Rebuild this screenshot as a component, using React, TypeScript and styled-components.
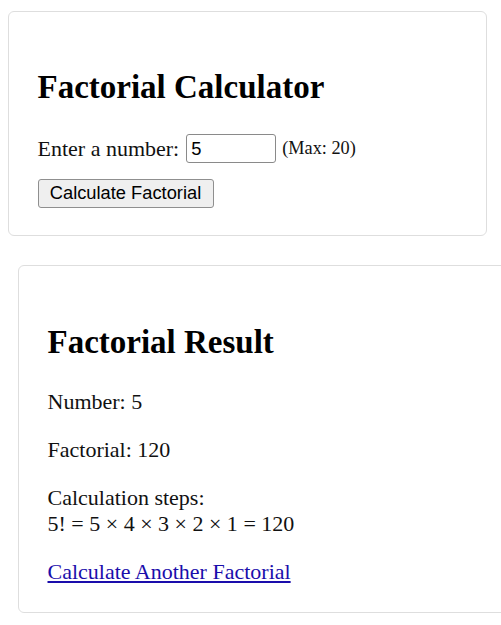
import styled, { createGlobalStyle } from 'styled-components';

const GlobalStyle = createGlobalStyle`
  html, body {
    margin: 0;
    padding: 0;
    background: #fff;
    overflow: hidden;
  }
  body {
    font-family: "Liberation Serif", "Times New Roman", serif;
    font-size: 22px;
    color: #111;
  }
`;

export default function App() {
  const n = 5;
  const steps = [5, 4, 3, 2, 1];
  const result = steps.reduce((a, b) => a * b, 1);

  return (
    <Page>
      <GlobalStyle />
      <Card $left={8} $top={11} $width={479} $padTop={29}>
        <Title>Factorial Calculator</Title>
        <Form onSubmit={(e) => e.preventDefault()}>
          <InputRow>
            <Label htmlFor="num">Enter a number:</Label>
            <NumberInput id="num" type="text" defaultValue={n} />
            <Hint>(Max: 20)</Hint>
          </InputRow>
          <div>
            <SubmitButton type="submit">Calculate Factorial</SubmitButton>
          </div>
        </Form>
      </Card>
      <Card $left={18} $top={29} $width={500} $padTop={29.5}>
        <Title>Factorial Result</Title>
        <Para>Number: {n}</Para>
        <Para>Factorial: {result}</Para>
        <Para>
          Calculation steps:
          <br />
          {n}! = {steps.join(' × ')} = {result}
        </Para>
        <LinkBox>
          <Anchor href="#">Calculate Another Factorial</Anchor>
        </LinkBox>
      </Card>
    </Page>
  );
}

const Page = styled.div`
  display: flex;
  flex-direction: column;
  width: 501px;
  overflow: hidden;
`;

const Card = styled.section<{ $left: number; $top: number; $width: number; $padTop: number }>`
  box-sizing: border-box;
  flex: none;
  width: ${({ $width }) => $width}px;
  margin-left: ${({ $left }) => $left}px;
  margin-top: ${({ $top }) => $top}px;
  padding: 0 27.5px 27.5px 28.5px;
  border: 1.5px solid #dedede;
  border-radius: 6px;
  background: #fff;
  &::before {
    content: '';
    display: block;
    height: ${({ $padTop }) => $padTop}px;
  }
`;

const Title = styled.h2`
  margin: 27.4px 0;
  font-size: 33px;
  font-weight: bold;
  line-height: 38px;
  color: #000;
`;

const Form = styled.form`
  display: flex;
  flex-direction: column;
  gap: 15px;
`;

const InputRow = styled.div`
  display: flex;
  align-items: center;
  height: 30px;
`;

const Label = styled.label`
  margin-right: 7px;
`;

const NumberInput = styled.input`
  box-sizing: border-box;
  width: 90px;
  height: 29px;
  padding: 1px 4px;
  border: 1.5px solid #8a8a8a;
  border-radius: 3px;
  font-family: "Liberation Sans", Arial, sans-serif;
  font-size: 18.3px;
  color: #000;
  background: #fff;
`;

const Hint = styled.small`
  margin-left: 6px;
  font-size: 18.3px;
`;

const SubmitButton = styled.button`
  box-sizing: border-box;
  width: 176px;
  height: 29px;
  padding: 0 8px;
  border: 1.5px solid #8f8f8f;
  border-radius: 3px;
  background: #efefef;
  font-family: "Liberation Sans", Arial, sans-serif;
  font-size: 18.3px;
  color: #000;
`;

const Para = styled.p`
  margin: 22px 0;
  line-height: 26px;
`;

const LinkBox = styled.div`
  line-height: 26px;
`;

const Anchor = styled.a`
  color: #1a0dab;
  text-decoration: underline;
`;
